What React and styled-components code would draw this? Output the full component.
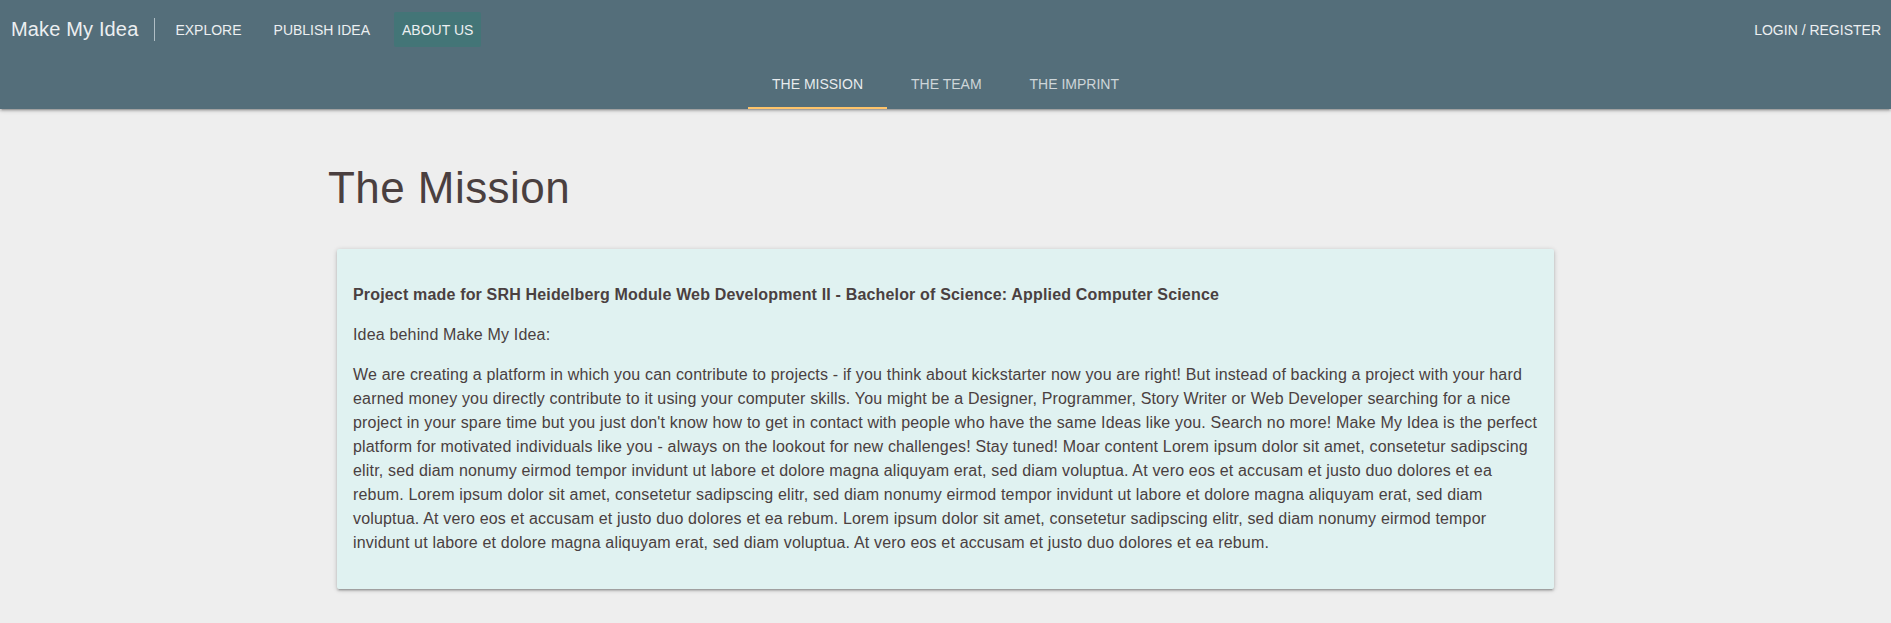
import React from "react";
import styled, { createGlobalStyle } from "styled-components";

const GlobalStyle = createGlobalStyle`
  html, body {
    margin: 0;
    padding: 0;
    background-color: #eeeeee;
    font-family: "Liberation Sans", Arial, sans-serif;
    color: #4a4040;
  }
  * {
    box-sizing: border-box;
  }
`;

const navLinks = [
  { label: "EXPLORE" },
  { label: "PUBLISH IDEA" },
  { label: "ABOUT US", active: true },
];

const tabs = [
  { label: "THE MISSION", active: true },
  { label: "THE TEAM" },
  { label: "THE IMPRINT" },
];

function App() {
  return (
    <React.Fragment>
      <GlobalStyle />
      <Header>
        <TopBar>
          <Brand>Make My Idea</Brand>
          <Divider />
          <NavList>
            {navLinks.map((link) => (
              <NavLink key={link.label} $active={link.active}>
                {link.label}
              </NavLink>
            ))}
          </NavList>
          <RightNav>
            <NavLink>LOGIN / REGISTER</NavLink>
          </RightNav>
        </TopBar>
        <TabBar>
          {tabs.map((tab) => (
            <Tab key={tab.label} $active={tab.active}>
              {tab.label}
            </Tab>
          ))}
        </TabBar>
      </Header>

      <Main>
        <Title>The Mission</Title>
        <Card>
          <Paragraph>
            <strong>
              Project made for SRH Heidelberg Module Web Development II - Bachelor of Science: Applied Computer Science
            </strong>
          </Paragraph>
          <Paragraph>Idea behind Make My Idea:</Paragraph>
          <Paragraph>
            We are creating a platform in which you can contribute to projects - if you think about kickstarter now you
            are right! But instead of backing a project with your hard earned money you directly contribute to it using
            your computer skills. You might be a Designer, Programmer, Story Writer or Web Developer searching for a nice
            project in your spare time but you just don't know how to get in contact with people who have the same Ideas
            like you. Search no more! Make My Idea is the perfect platform for motivated individuals like you - always on
            the lookout for new challenges! Stay tuned! Moar content Lorem ipsum dolor sit amet, consetetur sadipscing
            elitr, sed diam nonumy eirmod tempor invidunt ut labore et dolore magna aliquyam erat, sed diam voluptua. At
            vero eos et accusam et justo duo dolores et ea rebum. Lorem ipsum dolor sit amet, consetetur sadipscing
            elitr, sed diam nonumy eirmod tempor invidunt ut labore et dolore magna aliquyam erat, sed diam voluptua. At
            vero eos et accusam et justo duo dolores et ea rebum. Lorem ipsum dolor sit amet, consetetur sadipscing
            elitr, sed diam nonumy eirmod tempor invidunt ut labore et dolore magna aliquyam erat, sed diam voluptua. At
            vero eos et accusam et justo duo dolores et ea rebum.
          </Paragraph>
        </Card>
      </Main>
    </React.Fragment>
  );
}

export default App;

// 상단 헤더
const Header = styled.header`
  background-color: #546e7a;
  box-shadow: 0 2px 2px 0 rgba(0, 0, 0, 0.14), 0 3px 1px -2px rgba(0, 0, 0, 0.12),
    0 1px 5px 0 rgba(0, 0, 0, 0.2);
  position: relative;
  z-index: 1;
`;

const TopBar = styled.nav`
  height: 59px;
  display: flex;
  align-items: center;
  padding: 0 2px 0 11px;
`;

const Brand = styled.div`
  font-size: 20px;
  letter-spacing: 0.15px;
  color: #eceff1;
  white-space: nowrap;
`;

const Divider = styled.div`
  width: 1px;
  height: 23px;
  background-color: #b0bec5;
  margin: 0 12px 0 16px;
`;

const NavList = styled.div`
  display: flex;
  align-items: center;
  gap: 16px;
`;

const NavLink = styled.a`
  display: flex;
  align-items: center;
  height: 35px;
  padding: 0 8px;
  font-size: 14px;
  color: #eceff1;
  white-space: nowrap;
  border-radius: 2px;
  cursor: pointer;
  background-color: ${(p) => (p.$active ? "#437577" : "transparent")};
`;

const RightNav = styled.div`
  margin-left: auto;
  display: flex;
`;

const TabBar = styled.div`
  height: 50px;
  display: flex;
  justify-content: center;
`;

const Tab = styled.div`
  display: flex;
  align-items: center;
  padding: 2px 24px 0;
  font-size: 14px;
  color: ${(p) => (p.$active ? "rgba(255, 255, 255, 0.88)" : "rgba(255, 255, 255, 0.72)")};
  border-bottom: 2px solid ${(p) => (p.$active ? "#ffc46a" : "transparent")};
  cursor: pointer;
`;

// 본문
const Main = styled.main`
  padding: 54px 328px 36px;
`;

const Title = styled.h1`
  margin: 0 0 36px;
  font-size: 44px;
  line-height: 50px;
  font-weight: 400;
  letter-spacing: 0.45px;
  color: #4a3f3f;
`;

const Card = styled.div`
  margin: 0 9px;
  background-color: #e0f2f1;
  border-radius: 2px;
  padding: 18px 16px;
  box-shadow: 0 2px 2px 0 rgba(0, 0, 0, 0.14), 0 3px 1px -2px rgba(0, 0, 0, 0.12),
    0 1px 5px 0 rgba(0, 0, 0, 0.2);
`;

const Paragraph = styled.p`
  margin: 16px 0;
  font-size: 16px;
  line-height: 24px;
  letter-spacing: 0.17px;
  color: #4a4040;
  strong {
    font-weight: 700;
  }
`;
